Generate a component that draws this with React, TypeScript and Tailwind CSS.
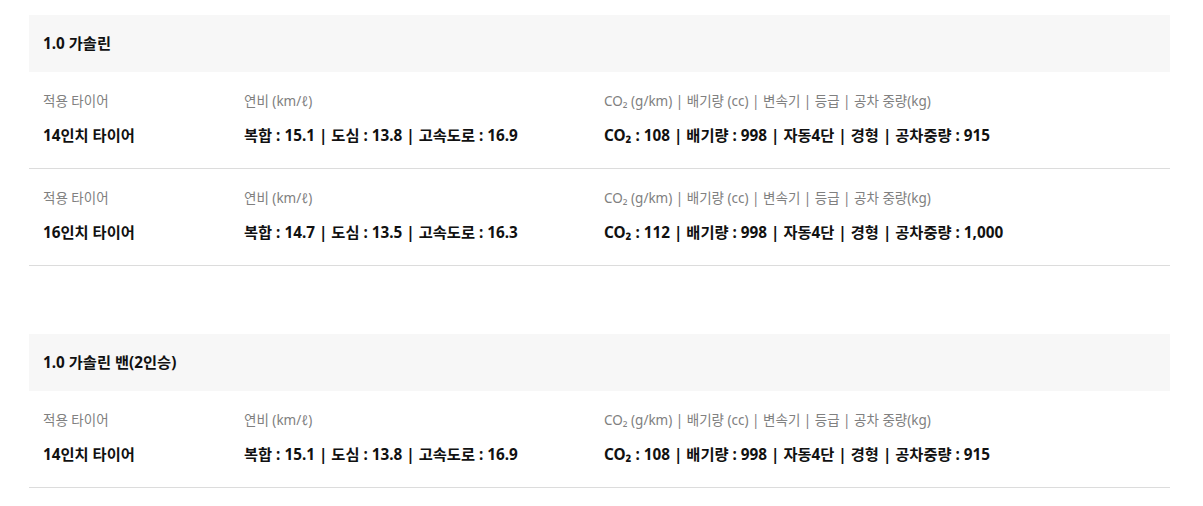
import React from "react";

type Row = { tire: string; fuel: string; co2: string };
type Section = { title: string; rows: Row[] };

const sections: Section[] = [
  {
    title: "1.0 가솔린",
    rows: [
      {
        tire: "14인치 타이어",
        fuel: "복합 : 15.1 | 도심 : 13.8 | 고속도로 : 16.9",
        co2: "CO₂ : 108 | 배기량 : 998 | 자동4단 | 경형 | 공차중량 : 915",
      },
      {
        tire: "16인치 타이어",
        fuel: "복합 : 14.7 | 도심 : 13.5 | 고속도로 : 16.3",
        co2: "CO₂ : 112 | 배기량 : 998 | 자동4단 | 경형 | 공차중량 : 1,000",
      },
    ],
  },
  {
    title: "1.0 가솔린 밴(2인승)",
    rows: [
      {
        tire: "14인치 타이어",
        fuel: "복합 : 15.1 | 도심 : 13.8 | 고속도로 : 16.9",
        co2: "CO₂ : 108 | 배기량 : 998 | 자동4단 | 경형 | 공차중량 : 915",
      },
    ],
  },
];

export default function App() {
  return (
    <div
      className="bg-white w-[1203px] min-h-[506px] pt-[15px] px-[29px] text-[#111]"
      style={{ fontFamily: '"Noto Sans", "Noto Sans CJK KR", sans-serif' }}
    >
      <div className="flex flex-col gap-[68px] w-[1141px]">
        {sections.map((s, i) => (
          <div key={i}>
            <div className="h-[57px] bg-[#f7f7f7] flex items-center px-[14px] text-[15.3px] font-bold">
              {s.title}
            </div>
            {s.rows.map((r, j) => (
              <div
                key={j}
                className="grid grid-cols-[201px_360px_1fr] px-[14px] pt-[19px] pb-[22px] border-b border-[#dcdcdc]"
              >
                <div className="flex flex-col">
                  <span className="text-[13.5px] leading-[20px] text-[#808080]">적용 타이어</span>
                  <span className="mt-[13px] text-[15.3px] leading-[22px] font-bold">{r.tire}</span>
                </div>
                <div className="flex flex-col">
                  <span className="text-[13.5px] leading-[20px] text-[#808080]">연비 (km/ℓ)</span>
                  <span className="mt-[13px] text-[15.3px] leading-[22px] font-bold">{r.fuel}</span>
                </div>
                <div className="flex flex-col">
                  <span className="text-[13.5px] leading-[20px] text-[#808080]">
                    CO₂ (g/km) | 배기량 (cc) | 변속기 | 등급 | 공차 중량(kg)
                  </span>
                  <span className="mt-[13px] text-[15.3px] leading-[22px] font-bold">{r.co2}</span>
                </div>
              </div>
            ))}
          </div>
        ))}
      </div>
    </div>
  );
}
